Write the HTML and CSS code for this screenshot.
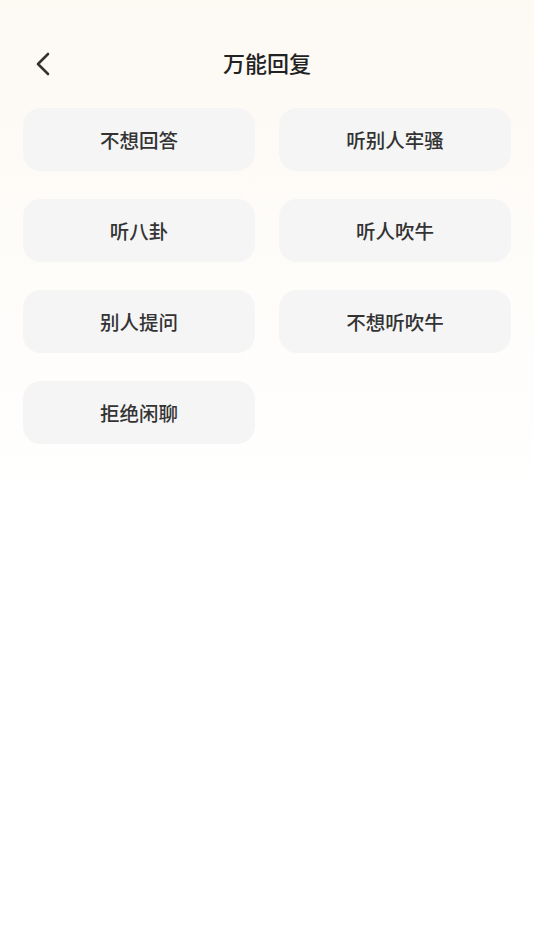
FILE: index.html
```html
<!DOCTYPE html>
<html lang="zh-CN">
<head>
  <meta charset="UTF-8" />
  <meta name="viewport" content="width=device-width, initial-scale=1.0"/>
  <title>万能回复</title>
  <link rel="stylesheet" href="styles.css">
</head>
<body>

<div class="page">
  <div class="header">
    <a class="back" href="#">
      <svg width="24" height="28" viewBox="0 0 24 28">
        <path d="M15 4 L5 14 L15 24" fill="none" stroke="#333" stroke-width="2.6" stroke-linecap="round" stroke-linejoin="round"/>
      </svg>
    </a>
    <h1>万能回复</h1>
  </div>

  <div class="grid">
    <div class="item">不想回答</div>
    <div class="item">听别人牢骚</div>
    <div class="item">听八卦</div>
    <div class="item">听人吹牛</div>
    <div class="item">别人提问</div>
    <div class="item">不想听吹牛</div>
    <div class="item">拒绝闲聊</div>
  </div>
</div>

</body>
</html>
```

FILE: styles.css
```css
body {
  margin: 0;
  font-family: "Noto Sans CJK SC", "Noto Sans", sans-serif;
  background: #fff;
  color: #333;
}

.page {
  min-height: 950px;
  background: linear-gradient(to bottom, #fdf9f3 0px, #fefcf9 250px, #ffffff 520px);
}

.header {
  position: relative;
  height: 64px;
  padding-top: 30px;
  padding-bottom: 2px;
  display: flex;
  align-items: center;
  justify-content: center;
}

.back {
  position: absolute;
  left: 33px;
  top: 50px;
  display: block;
}

.header h1 {
  margin: 0;
  font-size: 22px;
  font-weight: 500;
  color: #222;
}

.grid {
  display: grid;
  grid-template-columns: 1fr 1fr;
  column-gap: 24px;
  row-gap: 28px;
  padding: 12px 23px 0;
}

.item {
  height: 63px;
  border-radius: 18px;
  background: #f5f5f6;
  display: flex;
  align-items: center;
  justify-content: center;
  font-size: 19.5px;
  font-weight: 500;
  color: #333;
}
```
